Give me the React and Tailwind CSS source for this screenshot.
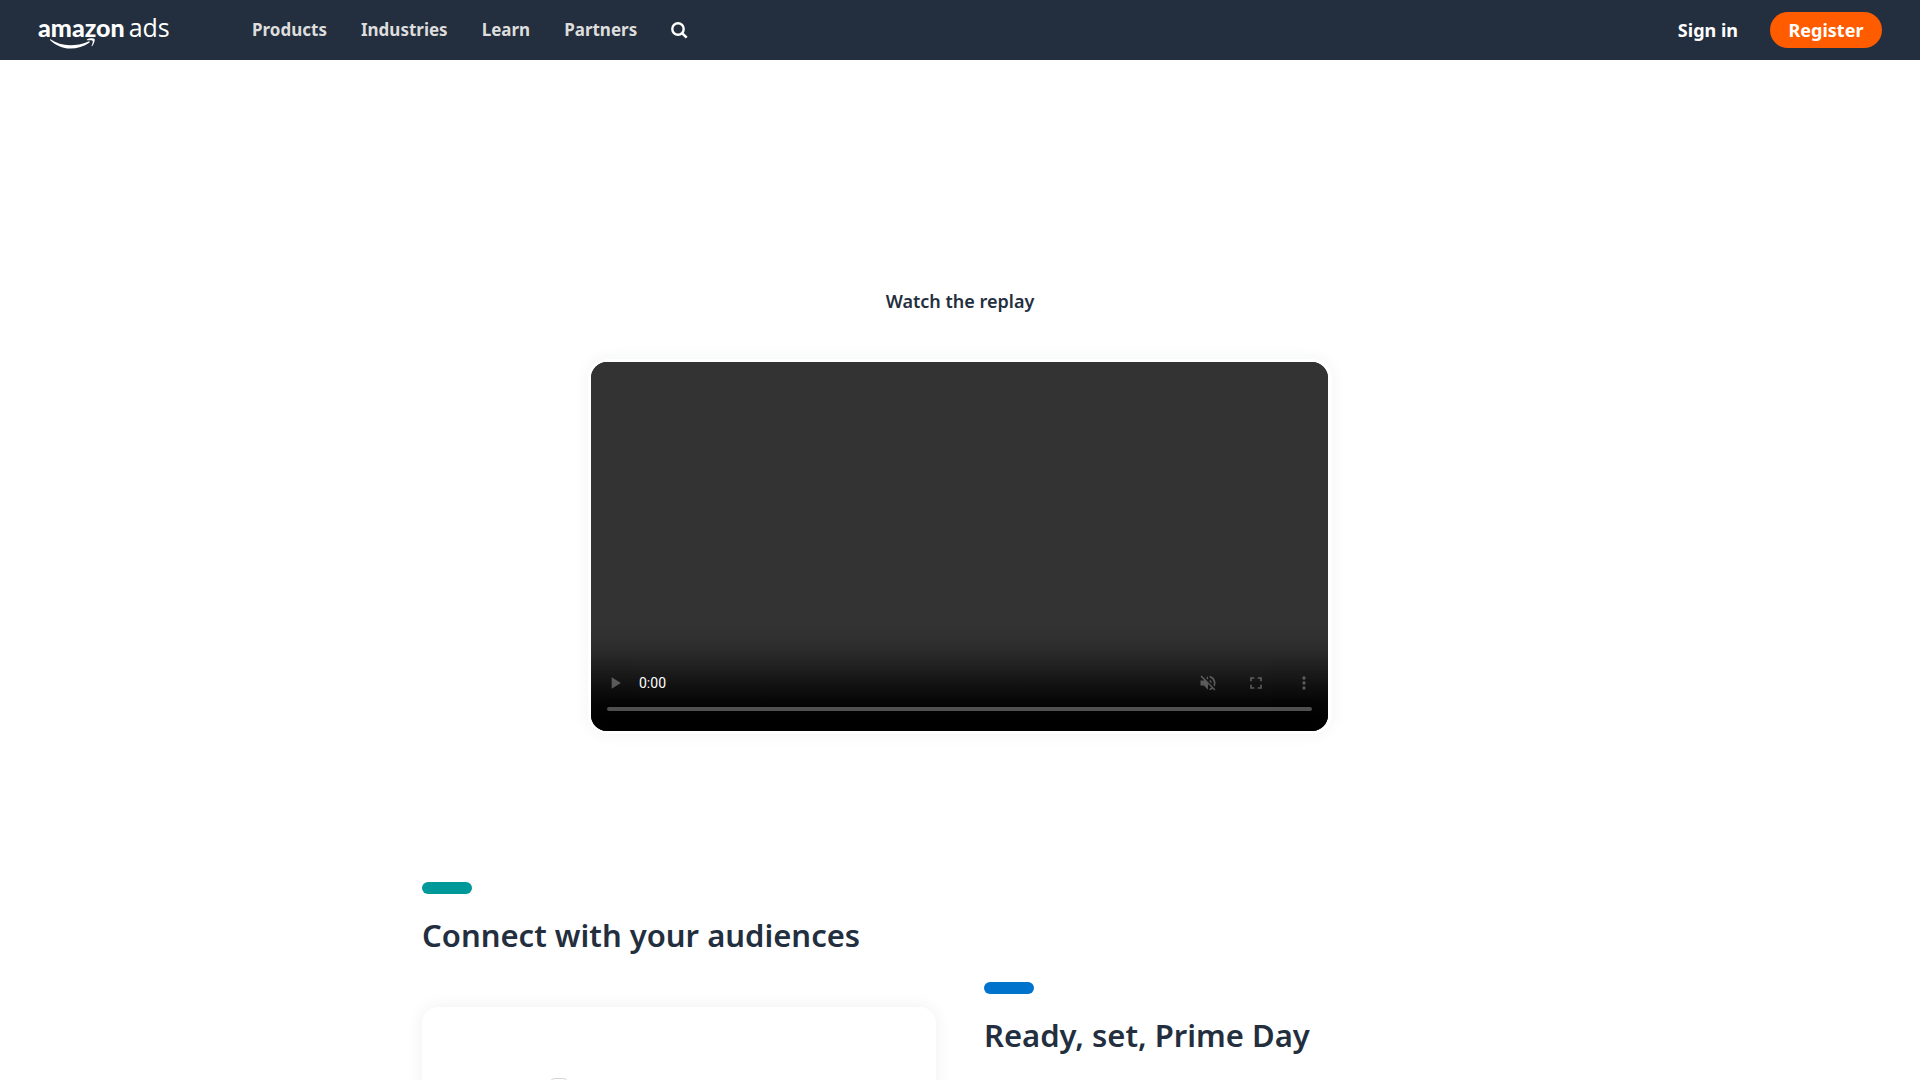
import React from "react";

const navLinks = ["Products", "Industries", "Learn", "Partners"];

function Logo() {
  return (
    <a href="#home" aria-label="amazon ads" className="relative flex h-11 w-[132px] items-baseline gap-1 leading-[38px] text-white">
      <span className="font-['Lato',sans-serif] text-[25px] font-black">amazon</span>
      <span className="font-['Open_Sans',sans-serif] text-[25px] font-normal">ads</span>
      <svg className="absolute left-3 top-[30px] h-3 w-12" viewBox="0 0 48 12" fill="currentColor" aria-hidden="true">
        <path d="M0.4 1.2C6 5 13 7.2 20 7.2c6 0 12.500-1.200 18.500-3.800 1-.4 1.700.6.8 1.300C34 8.500 27 10.500 20.500 10.500 12.500 10.500 5.500 7.300.2 2.200c-.6-.6-.3-1.300.2-1z" />
        <path d="M37 1.400c2-1.400 6.500-1.300 7.400-.6.9 1-.3 5.300-2.200 7.200-.4.400-.8.200-.6-.3.700-1.700 1.500-4 1.100-4.800-.5-.8-3.300-.7-5.200-.7-.6 0-.9-.4-.5-.8z" />
      </svg>
    </a>
  );
}

function Header() {
  return (
    <header className="flex h-15 items-center bg-[#232f3e] px-[38px] font-bold text-white">
      <Logo />
      <nav className="ml-[82px] flex items-center gap-[34px] text-[17px] text-[#dddddd]">
        {navLinks.map((label) => (
          <a key={label} href={"#" + label.toLowerCase()}>{label}</a>
        ))}
        <button type="button" aria-label="Search" className="text-white">
          <svg className="size-[17px]" viewBox="0 0 17 17" fill="none" stroke="currentColor" aria-hidden="true">
            <circle cx="7" cy="7" r="5.700" strokeWidth="2.400" />
            <path d="M11.300 11.300l4.400 4.400" strokeWidth="2.600" />
          </svg>
        </button>
      </nav>
      <div className="ml-auto flex items-center gap-8 text-[18px] leading-6">
        <a href="#signin">Sign in</a>
        <a href="#register" className="flex h-9 w-28 items-center justify-center rounded-full bg-[#ff5c00]">Register</a>
      </div>
    </header>
  );
}

export default function App() {
  return (
    <div className="h-screen overflow-hidden bg-white font-['Noto_Sans',sans-serif] text-[#232f3e]">
      <Header />
      <main>
        <section className="flex flex-col items-center pt-[228px]">
          <h2 className="text-[18px] font-semibold leading-[26px]">Watch the replay</h2>
          <div className="mt-[45px] w-full max-w-[744px] rounded-[20px] bg-white py-[3px] pl-[3px] pr-1 shadow-[0_0_16px_rgba(35,47,62,0.06)]">
            <video controls muted aria-label="Replay" className="aspect-[2/1] w-full rounded-2xl bg-[#333333]" />
          </div>
        </section>
        <section className="mx-auto mt-[148px] grid max-w-[1076px] grid-cols-2 gap-x-12">
          <div>
            <div className="h-3 w-[50px] rounded-full bg-[#009999]" />
            <h2 className="mt-[21px] text-[31px] font-semibold leading-10">Connect with your audiences</h2>
            <div className="mt-[52px] h-[400px] rounded-2xl bg-white pl-[127px] pt-[71px] shadow-[0_0_16px_rgba(35,47,62,0.08)]">
              <div className="size-5 rounded-md border border-gray-300" />
            </div>
          </div>
          <div className="pt-[100px]">
            <div className="h-3 w-[50px] rounded-full bg-[#0073cc]" />
            <h2 className="mt-[21px] text-[31px] font-semibold leading-10">Ready, set, Prime Day</h2>
          </div>
        </section>
      </main>
    </div>
  );
}
